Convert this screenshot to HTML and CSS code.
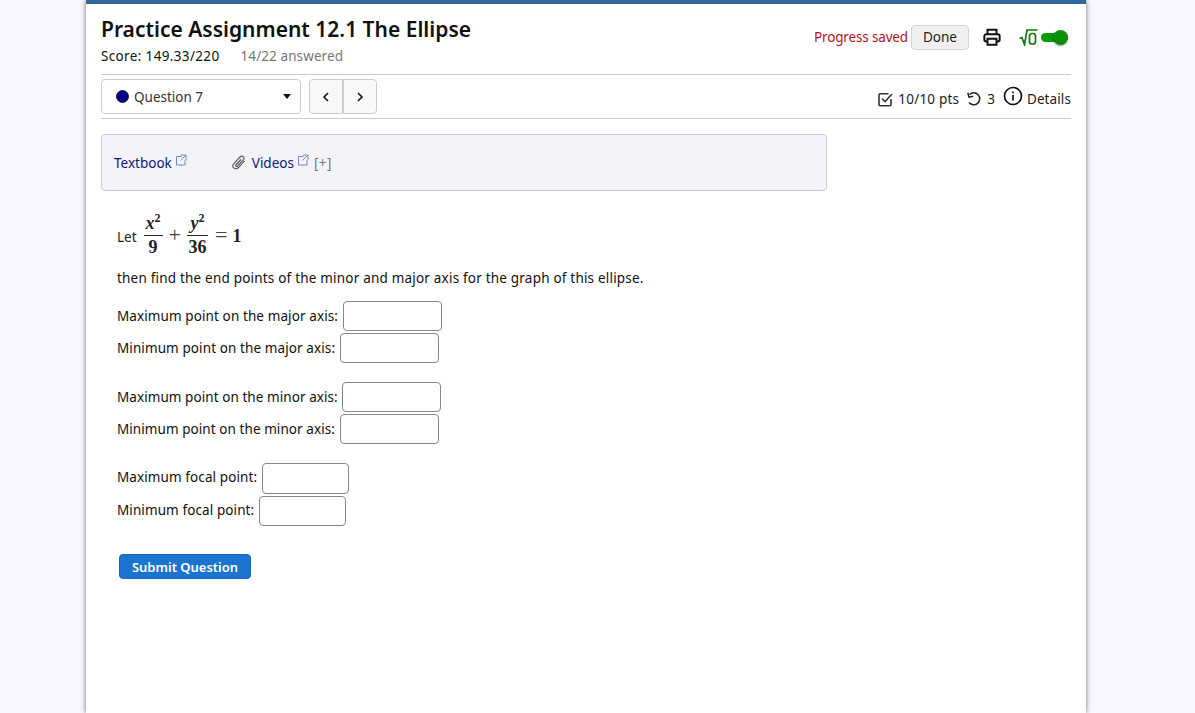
FILE: index.html
```html
<!DOCTYPE html>
<html lang="en">

<head>
    <meta charset="UTF-8">
    <meta name="viewport" content="width=device-width, initial-scale=1.0">
    <title>Practice Assignment 12.1 The Ellipse</title>
    <link rel="stylesheet" href="styles.css">
</head>

<body>
    <div class="page">
        <div class="header">
            <div class="title-block">
                <h1>Practice Assignment 12.1 The Ellipse</h1>
                <div class="score">
                    <span class="points">Score: 149.33/220</span>
                    <span class="answered">14/22 answered</span>
                </div>
            </div>
            <div class="actions">
                <span class="saved">Progress saved</span>
                <button class="done">Done</button>
                <svg class="print-icon" width="18" height="18" viewBox="0 0 20 20" fill="none" stroke="#111" stroke-width="2.200">
                    <path d="M5 7V2h10v5" />
                    <path d="M5 15H3.500a2 2 0 0 1-2-2V9a2 2 0 0 1 2-2h13a2 2 0 0 1 2 2v4a2 2 0 0 1-2 2H15" />
                    <path d="M5 12h10v6.500H5z" />
                </svg>
                <svg class="sqrt-icon" width="19" height="17" viewBox="0 0 19 17" fill="none" stroke="#0a7a0a" stroke-width="1.700">
                    <path d="M0.500 9.500l2.500-1 2.500 7L8 1h10.500" />
                    <rect x="10.500" y="4.500" width="6" height="10.500" rx="2.500" />
                </svg>
                <span class="toggle"><span class="knob"></span></span>
            </div>
        </div>

        <div class="nav-row">
            <div class="nav-left">
                <div class="question-select">
                    <span class="dot"></span>
                    <span class="question-label">Question 7</span>
                    <span class="caret"></span>
                </div>
                <div class="pager">
                    <button class="pager-btn">
                        <svg width="8" height="10" viewBox="0 0 8 10" fill="none" stroke="#111" stroke-width="1.600"><path d="M6 1L2 5l4 4" /></svg>
                    </button>
                    <button class="pager-btn">
                        <svg width="8" height="10" viewBox="0 0 8 10" fill="none" stroke="#111" stroke-width="1.600"><path d="M2 1l4 4-4 4" /></svg>
                    </button>
                </div>
            </div>
            <div class="nav-right">
                <svg width="15" height="15" viewBox="0 0 15 15" fill="none" stroke="#333" stroke-width="1.600">
                    <path d="M13 7v5.500a1.200 1.200 0 0 1-1.200 1.200H2.200A1.200 1.200 0 0 1 1 12.500V3a1.200 1.200 0 0 1 1.200-1.200h8.300" />
                    <path d="M4 6.500l3 3L14 2" />
                </svg>
                <span class="pts">10/10 pts</span>
                <svg class="retry-icon" width="16" height="16" viewBox="0 0 16 16" fill="none" stroke="#222" stroke-width="1.500">
                    <path d="M3.500 3.500A6 6 0 1 1 3 11.500" />
                    <path d="M1.800 1.800l1.200 4.400 4.300-1" />
                </svg>
                <span class="tries">3</span>
                <svg class="info-icon" width="20" height="20" viewBox="0 0 20 20" fill="none" stroke="#111" stroke-width="1.700">
                    <circle cx="10" cy="10" r="8.500" />
                    <path d="M10 9v5.500" />
                    <path d="M10 5.500v1.700" />
                </svg>
                <span class="details">Details</span>
            </div>
        </div>

        <div class="resources">
            <a class="res-link" href="#">Textbook<svg class="ext" width="12" height="12" viewBox="0 0 12 12" fill="none" stroke="#6f86c8"><path d="M6.500 2.500h-5v8.500h8.500V6" /><path d="M6 1h5v5" /><path d="M11 1L5.500 6.500" /></svg></a>
            <span class="res-videos">
                <svg class="clip" width="16" height="17" viewBox="0 0 16 16" fill="none" stroke="#555" stroke-width="1.100">
                    <path d="M13.500 6.500l-6 6.500c-1.500 1.500-3.700 1.500-4.800 0.400-1.200-1.200-1-3.200 0.400-4.600L9 2.500c1-1 2.500-1 3.400-0.200 0.900 1 0.800 2.400-0.200 3.400L6.500 11.500c-0.500 0.500-1.200 0.500-1.600 0.100-0.400-0.500-0.300-1.100 0.200-1.600l5-5" />
                </svg>
                <a class="res-link" href="#">Videos<svg class="ext" width="12" height="12" viewBox="0 0 12 12" fill="none" stroke="#6f86c8"><path d="M6.500 2.500h-5v8.500h8.500V6" /><path d="M6 1h5v5" /><path d="M11 1L5.500 6.500" /></svg></a>
                <span class="plus">[+]</span>
            </span>
        </div>

        <div class="question">
            <div class="equation">
                <span class="let">Let</span>
                <span class="frac"><span class="num"><i>x</i><sup>2</sup></span><span class="den">9</span></span>
                <span class="op">+</span>
                <span class="frac"><span class="num"><i>y</i><sup>2</sup></span><span class="den">36</span></span>
                <span class="op eq">=</span>
                <span class="rhs">1</span>
            </div>
            <p class="prompt">then find the end points of the minor and major axis for the graph of this ellipse.</p>

            <div class="answer-group">
                <label class="answer-row">Maximum point on the major axis: <input type="text"></label>
                <label class="answer-row">Minimum point on the major axis: <input type="text"></label>
            </div>
            <div class="answer-group minor">
                <label class="answer-row">Maximum point on the minor axis: <input type="text"></label>
                <label class="answer-row">Minimum point on the minor axis: <input type="text"></label>
            </div>
            <div class="answer-group focal">
                <label class="answer-row">Maximum focal point: <input class="short" type="text"></label>
                <label class="answer-row">Minimum focal point: <input class="short" type="text"></label>
            </div>

            <button class="submit">Submit Question</button>
        </div>
    </div>
</body>

</html>
```

FILE: styles.css
```css
* {
    margin: 0;
    padding: 0;
    box-sizing: border-box;
}

html,
body {
    height: 100%;
    overflow: hidden;
}

body {
    font-family: "Noto Sans", "Open Sans", sans-serif;
    font-size: 13.500px;
    color: #111;
    background: #f6f7ff;
}

.page {
    width: 1000px;
    height: 713px;
    margin-left: 86px;
    padding: 0 15px;
    background: white;
    border-top: 4px solid #336699;
    box-shadow: 0 0 5px rgba(0, 0, 0, 0.55);
}

.header {
    display: flex;
    justify-content: space-between;
    height: 71px;
    border-bottom: 1px solid #ccc;
}

h1 {
    font-size: 21px;
    font-weight: 600;
    line-height: 30px;
    margin-top: 10px;
}

.score {
    display: flex;
    gap: 21px;
    margin-top: 3px;
    line-height: 18px;
}

.points {
    letter-spacing: 0.35px;
}

.answered {
    color: #777;
    letter-spacing: 0.1px;
}

.actions {
    display: flex;
    align-items: center;
    height: 26px;
    margin-top: 20px;
    padding-right: 3px;
}

.saved {
    color: #b5121b;
    letter-spacing: -0.15px;
    margin-right: 3px;
}

.done {
    width: 58px;
    height: 25px;
    font: inherit;
    color: #222;
    background: #f0f0f0;
    border: 1px solid #d4d4d4;
    border-radius: 4px;
}

.print-icon {
    margin-left: 14px;
}

.sqrt-icon {
    margin-left: 18px;
    margin-right: 3px;
}

.toggle {
    position: relative;
    width: 27px;
    height: 9px;
    background: #0a9a0a;
    border-radius: 5px;
}

.knob {
    position: absolute;
    top: -3px;
    right: 0;
    width: 15px;
    height: 15px;
    background: #0a8f0a;
    border-radius: 50%;
    box-shadow: 0 1px 2px rgba(0, 0, 0, 0.4);
}

.nav-row {
    display: flex;
    justify-content: space-between;
    align-items: center;
    height: 44px;
    border-bottom: 1px solid #ccc;
}

.nav-left {
    display: flex;
    gap: 8px;
}

.question-select {
    display: flex;
    align-items: center;
    width: 200px;
    height: 35px;
    padding: 0 9px 0 14px;
    border: 1px solid #ccc;
    border-radius: 4px;
}

.dot {
    width: 13px;
    height: 13px;
    margin-right: 5px;
    background: #00008b;
    border: 1px solid #223;
    border-radius: 50%;
}

.question-label {
    flex: 1;
    color: #333;
}

.caret {
    width: 0;
    height: 0;
    border-left: 4px solid transparent;
    border-right: 4px solid transparent;
    border-top: 5px solid #111;
}

.pager {
    display: flex;
}

.pager-btn {
    display: flex;
    align-items: center;
    justify-content: center;
    width: 34px;
    height: 35px;
    background: #f8f8f8;
    border: 1px solid #ccc;
    border-radius: 4px 0 0 4px;
}

.pager-btn + .pager-btn {
    border-radius: 0 4px 4px 0;
}

.nav-right {
    display: flex;
    align-items: center;
    color: #222;
    padding-top: 5px;
}

.pts {
    margin-left: 5px;
    letter-spacing: 0.2px;
}

.retry-icon {
    margin-left: 7px;
}

.tries {
    margin-left: 5px;
}

.info-icon {
    margin-left: 8px;
    margin-right: 4px;
    margin-top: -7px;
}

.details {
    letter-spacing: 0.1px;
}

.resources {
    display: flex;
    align-items: center;
    width: 726px;
    height: 57px;
    margin-top: 15px;
    padding: 0 12px;
    background: #f3f3f9;
    border: 1px solid #ccc;
    border-radius: 4px;
}

.res-link {
    color: #0c1a78;
    text-decoration: none;
}

.ext {
    margin-left: 3px;
    vertical-align: 2px;
}

.res-videos {
    display: flex;
    align-items: center;
    margin-left: 44px;
}

.clip {
    margin-right: 5px;
}

.plus {
    margin-left: 5px;
    color: #777;
    letter-spacing: 0.5px;
}

.question {
    padding: 20px 16px 0;
}

.equation {
    display: flex;
    align-items: center;
    height: 48px;
    font-family: "Liberation Serif", serif;
    font-size: 18px;
    font-weight: 700;
    color: #222;
}

.let {
    font-family: "Noto Sans", sans-serif;
    font-size: 13.500px;
    font-weight: 400;
    margin-right: 7px;
    padding-top: 3px;
}

.frac {
    display: inline-flex;
    flex-direction: column;
    align-items: center;
    min-width: 19px;
}

.num {
    padding: 0 1px 1px;
    line-height: 22px;
    border-bottom: 1px solid #222;
    width: 100%;
    text-align: center;
}

.num sup {
    font-size: 12px;
    line-height: 0;
}

.den {
    padding: 1px 1.500px 0;
    line-height: 21px;
}

.op {
    margin: 0 6px;
    font-size: 22px;
    font-weight: 400;
    color: #444;
}

.eq {
    margin: 0 5px 0 7px;
}

.rhs {
    padding-top: 2px;
}

.prompt {
    margin-top: 9px;
    line-height: 20px;
    letter-spacing: 0.2px;
}

.answer-group {
    margin-top: 13px;
    margin-bottom: 17px;
}

.answer-group + .answer-group {
    margin-top: 0;
}

.answer-group.focal {
    margin-top: -1px;
}

.answer-row {
    display: block;
    height: 32px;
    line-height: 30px;
    letter-spacing: 0.1px;
}

.minor .answer-row {
    letter-spacing: 0.07px;
}

.focal .answer-row:first-child {
    height: 33px;
}

.answer-row input {
    width: 99px;
    height: 30px;
    margin-left: 1px;
    margin-bottom: 2px;
    vertical-align: middle;
    background: white;
    border: 1px solid #888;
    border-radius: 4px;
}

.answer-row input.short {
    width: 87px;
    margin-bottom: 0;
}

.focal .answer-row:first-child input {
    height: 31px;
}

.submit {
    display: block;
    width: 132px;
    height: 25px;
    margin-top: 27px;
    margin-left: 2px;
    font: inherit;
    font-size: 13px;
    font-weight: 600;
    color: white;
    background: #1b74d0;
    border: 1px solid #1769be;
    border-radius: 4px;
}
```
